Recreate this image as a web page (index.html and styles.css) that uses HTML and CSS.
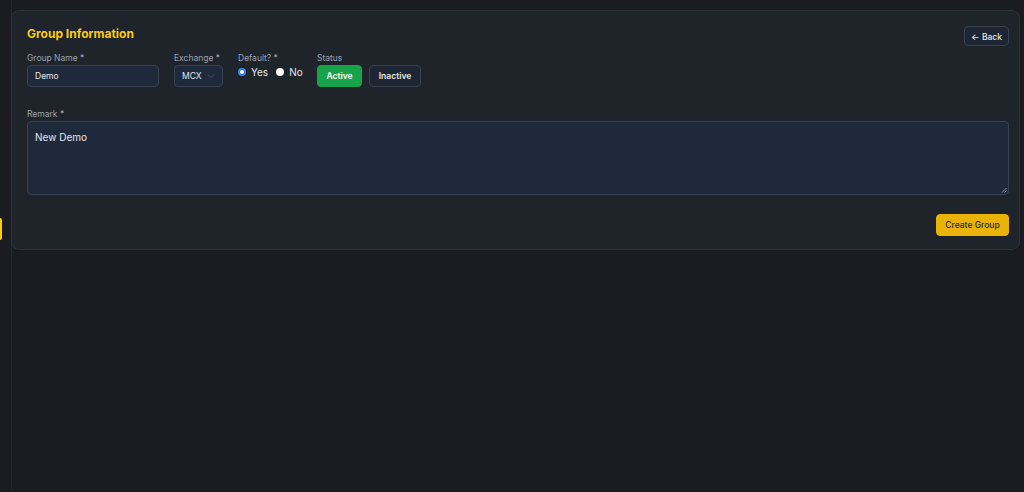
FILE: index.html
```html
<!DOCTYPE html>
<html lang="en">
<head>
<meta charset="utf-8">
<title>Group Information</title>
<link rel="stylesheet" href="styles.css">
</head>
<body>
<div class="app">
  <aside class="rail"><span class="rail-mark"></span></aside>
  <main class="main">
    <section class="card">
      <div class="card-head">
        <h1 class="title">Group Information</h1>
        <button class="btn-back"><span class="arrow">&#8592;</span> Back</button>
      </div>
      <div class="row">
        <div class="field f-name">
          <label class="lbl">Group Name *</label>
          <div class="input">Demo</div>
        </div>
        <div class="field f-exch">
          <label class="lbl">Exchange *</label>
          <div class="input select">MCX
            <svg class="chev" width="8" height="6" viewBox="0 0 8 6"><path d="M1 1.5 L4 4.5 L7 1.5" fill="none" stroke="#4b5563" stroke-width="1"/></svg>
          </div>
        </div>
        <div class="field f-def">
          <label class="lbl">Default? *</label>
          <div class="radios">
            <span class="radio"><span class="dot on"></span>Yes</span>
            <span class="radio"><span class="dot"></span>No</span>
          </div>
        </div>
        <div class="field f-status">
          <label class="lbl">Status</label>
          <div class="status-btns">
            <button class="btn-status active">Active</button>
            <button class="btn-status">Inactive</button>
          </div>
        </div>
      </div>
      <div class="field f-remark">
        <label class="lbl">Remark *</label>
        <div class="textarea">New Demo
          <svg class="grip" width="6" height="6" viewBox="0 0 6 6"><path d="M5.5 1 L1 5.5 M5.5 3.5 L3.5 5.5" stroke="#9ca3af" stroke-width="0.9"/></svg>
        </div>
      </div>
      <div class="actions">
        <button class="btn-create">Create Group</button>
      </div>
    </section>
  </main>
</div>
</body>
</html>
```

FILE: styles.css
```css
* { box-sizing: border-box; }
html, body { margin: 0; height: 100%; }
body {
  background: #1a1c21;
  font-family: Inter, "Noto Sans", sans-serif;
  color: #e5e7eb;
}
.app { display: flex; height: 492px; }
.rail {
  width: 11px;
  flex: none;
  background: #1a1c21;
  position: relative;
}
.rail-mark {
  position: absolute;
  left: 0;
  top: 218px;
  width: 2px;
  height: 22px;
  background: #facc15;
  border-radius: 0 2px 2px 0;
}
.main {
  flex: 1;
  border-left: 1px solid #252830;
  padding: 10px 4px 0 0;
}
.card {
  background: #1f232a;
  border: 1px solid #2c323d;
  border-radius: 8px;
  padding: 15px 10px 13px 15px;
  height: 240px;
  margin-left: -1px;
}
.card-head {
  display: flex;
  justify-content: space-between;
  align-items: flex-start;
}
.title {
  margin: 0;
  font-size: 12px;
  font-weight: 700;
  color: #facc15;
  line-height: 16px;
}
.btn-back {
  font-family: inherit;
  background: #1e2533;
  border: 1px solid #374151;
  color: #e5e7eb;
  font-size: 8.5px;
  font-weight: 500;
  border-radius: 4px;
  height: 20px;
  width: 45px;
  padding: 0;
}
.arrow { font-size: 9px; }
.row {
  display: flex;
  gap: 15px;
  margin-top: 7px;
}
.field { display: flex; flex-direction: column; }
.lbl {
  font-size: 8.5px;
  color: #9ca3af;
  line-height: 10px;
  margin-bottom: 2px;
}
.input {
  height: 22px;
  background: #1e293b;
  border: 1px solid #374151;
  border-radius: 4px;
  font-size: 8.5px;
  color: #e5e7eb;
  display: flex;
  align-items: center;
  padding: 0 7px;
}
.f-name .input { width: 132px; }
.select { width: 49px; justify-content: space-between; padding: 0 7px 0 7px; }
.chev { flex: none; }
.radios { display: flex; gap: 8px; align-items: center; height: 10px; margin-top: 2px; }
.radio {
  display: flex; align-items: center; gap: 5px;
  font-size: 10px; color: #e5e7eb;
}
.dot {
  width: 8px; height: 8px; border-radius: 50%;
  background: #ffffff;
  display: inline-block;
}
.dot.on {
  background: #ffffff;
  border: 2.5px solid #3b82f6;
}
.status-btns { display: flex; gap: 7px; }
.btn-status {
  font-family: inherit;
  height: 22px;
  font-size: 8.5px;
  font-weight: 600;
  border-radius: 4px;
  border: 1px solid #374151;
  background: #1e2533;
  color: #e5e7eb;
  padding: 0;
  width: 52px;
}
.btn-status.active {
  background: #16a34a;
  border-color: #16a34a;
  color: #ffffff;
  width: 45px;
}
.f-def { width: 64px; }
.f-remark { margin-top: 22px; }
.textarea {
  position: relative;
  height: 74px;
  background: #1e293b;
  border: 1px solid #374151;
  border-radius: 4px;
  font-size: 10px;
  color: #e5e7eb;
  padding: 9px 7px;
}
.grip { position: absolute; right: 1px; bottom: 1px; }
.actions {
  display: flex;
  justify-content: flex-end;
  margin-top: 19px;
}
.btn-create {
  font-family: inherit;
  background: #eab308;
  border: 1px solid #eab308;
  color: #1f2937;
  font-size: 8.5px;
  font-weight: 500;
  border-radius: 4px;
  height: 22px;
  width: 73px;
  padding: 0;
}
```
